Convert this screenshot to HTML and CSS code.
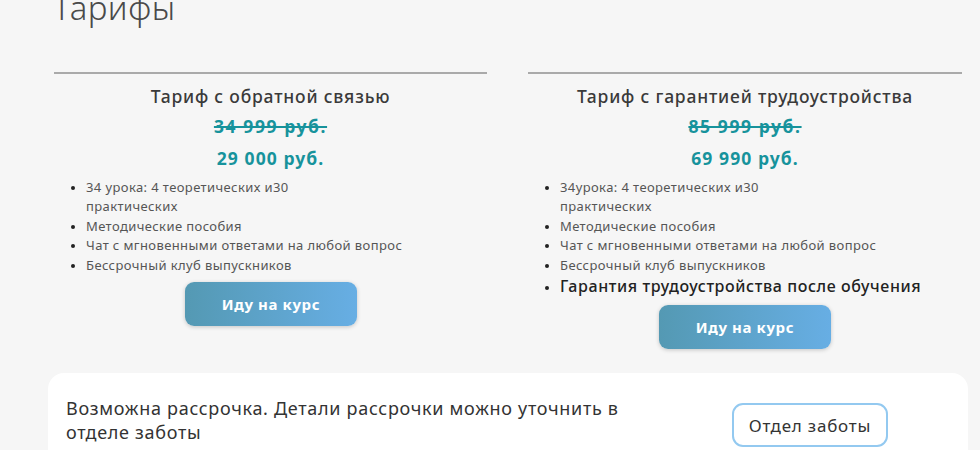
FILE: index.html
```html
<!DOCTYPE html>
<html lang="ru">
<head>
<meta charset="utf-8">
<link rel="stylesheet" href="styles.css">
</head>
<body>
<div class="page">
  <h1 class="title">Тарифы</h1>
  <div class="plans">
    <div class="plan">
      <h2 class="plan-name">Тариф с обратной связью</h2>
      <div class="old-price">34 999 руб.</div>
      <div class="new-price">29 000 руб.</div>
      <ul class="features">
        <li>34 урока: 4 теоретических и30<br>практических</li>
        <li>Методические пособия</li>
        <li>Чат с мгновенными ответами на любой вопрос</li>
        <li>Бессрочный клуб выпускников</li>
      </ul>
      <button class="btn">Иду на курс</button>
    </div>
    <div class="plan">
      <h2 class="plan-name">Тариф с гарантией трудоустройства</h2>
      <div class="old-price">85 999 руб.</div>
      <div class="new-price">69 990 руб.</div>
      <ul class="features">
        <li>34урока: 4 теоретических и30<br>практических</li>
        <li>Методические пособия</li>
        <li>Чат с мгновенными ответами на любой вопрос</li>
        <li>Бессрочный клуб выпускников</li>
        <li class="strong">Гарантия трудоустройства после обучения</li>
      </ul>
      <button class="btn">Иду на курс</button>
    </div>
  </div>
  <div class="installment">
    <p class="installment-text">Возможна рассрочка. Детали рассрочки можно уточнить в<br>отделе заботы</p>
    <button class="care-btn">Отдел заботы</button>
  </div>
</div>
</body>
</html>
```

FILE: styles.css
```css
* { box-sizing: border-box; }
html, body { margin: 0; padding: 0; }
body {
  background: #f6f6f6;
  font-family: "Noto Sans", "DejaVu Sans", sans-serif;
  color: #3a3a3a;
  width: 980px;
  height: 450px;
  overflow: hidden;
}
.page {
  padding: 0 12px 0 48px;
}
.title {
  margin: -11px 0 0 5px;
  font-size: 33px;
  font-weight: 300;
  letter-spacing: 0.5px;
  color: #4a4a4a;
  line-height: 38px;
  height: 25px;
}
.plans {
  display: grid;
  grid-template-columns: 433px 434px;
  column-gap: 41px;
  margin-left: 6px;
  margin-top: 58px;
}
.plan {
  border-top: 2px solid #aaaaaa;
  display: flex;
  flex-direction: column;
  align-items: center;
}
.plan-name {
  margin: 11px 0 0;
  font-size: 17.5px;
  font-weight: 500;
  letter-spacing: 0.8px;
  line-height: 22px;
  color: #3a3a3a;
}
.old-price {
  margin-top: 9px;
  font-size: 17.5px;
  font-weight: 700;
  letter-spacing: 1.6px;
  color: #17939c;
  text-decoration: line-through;
  text-decoration-thickness: 2px;
  line-height: 20px;
}
.new-price {
  margin-top: 12px;
  font-size: 17.5px;
  font-weight: 700;
  letter-spacing: 1.1px;
  color: #17939c;
  line-height: 20px;
}
.features {
  align-self: stretch;
  margin: 10px 0 0;
  padding: 0 0 0 32px;
  font-size: 13px;
  letter-spacing: 0.4px;
  line-height: 19.4px;
  color: #555;
}
.features li::marker { color: #222; font-size: 11px; }
.features .strong {
  font-size: 16px;
  font-weight: 500;
  letter-spacing: 0.6px;
  color: #222;
  line-height: 23px;
}
.btn {
  margin-top: 7px;
  width: 172px;
  height: 44px;
  border: none;
  border-radius: 9px;
  background: linear-gradient(90deg, #5499b3 0%, #67aee4 100%);
  box-shadow: 0 1px 4px rgba(0, 0, 0, 0.2);
  color: #fff;
  font-family: inherit;
  font-size: 15px;
  font-weight: 700;
  letter-spacing: 0.6px;
}
.plan:first-child .btn { margin-left: 1px; }
.installment {
  margin-top: 24px;
  background: #fff;
  border-radius: 16px;
  min-height: 100px;
  display: flex;
  align-items: flex-start;
  padding: 23px 80px 0 18px;
  justify-content: space-between;
}
.installment-text {
  margin: 0;
  font-size: 18px;
  letter-spacing: 0.7px;
  line-height: 24px;
  color: #333;
}
.care-btn {
  margin-top: 7px;
  width: 156px;
  height: 44px;
  background: #fff;
  border: 2px solid #93c9f0;
  border-radius: 11px;
  font-family: inherit;
  font-size: 17px;
  letter-spacing: 0.8px;
  color: #333;
}
```
